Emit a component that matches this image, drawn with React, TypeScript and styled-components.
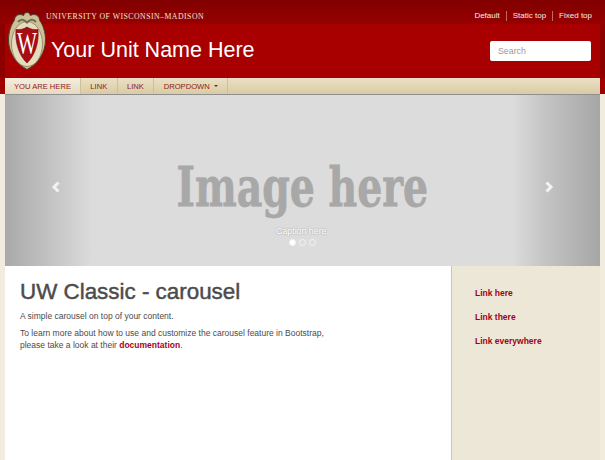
import React from "react";
import styled, { createGlobalStyle } from "styled-components";

const Global = createGlobalStyle`
  html, body { margin: 0; padding: 0; height: 100%; overflow: hidden; }
  body { background: #ede7d7; font-family: "Liberation Sans", Arial, sans-serif; color: #4f4f4f; }
`;

const Page = styled.div`
  width: 605px;
  height: 460px;
  overflow: hidden;
  position: relative;
  background: linear-gradient(#a00000 0, #a00000 94px, #f2ecdf 94px);
`;

const TopStrip = styled.div`
  height: 24px;
  box-sizing: border-box;
  display: flex;
  align-items: center;
  justify-content: space-between;
  padding: 8px 13px 0 46px;
  background: linear-gradient(#820000, #960000);
`;

const Wordmark = styled.div`
  font-family: "Liberation Serif", serif;
  font-size: 7.8px;
  letter-spacing: 0.46px;
  color: #f0e2d6;
  white-space: nowrap;
`;

const Utility = styled.nav`
  display: flex;
  align-items: center;
  font-size: 8px;
  color: #f6ece2;
`;

const UtilityLink = styled.a<{ $divided?: boolean }>`
  padding-left: ${(p) => (p.$divided ? "6px" : "0")};
  margin-left: ${(p) => (p.$divided ? "6px" : "0")};
  border-left: ${(p) => (p.$divided ? "1px solid #c26a5e" : "none")};
  line-height: 10px;
`;

const Masthead = styled.header`
  height: 54px;
  margin: 0 5px;
  box-sizing: border-box;
  display: flex;
  align-items: center;
  justify-content: space-between;
  padding: 0 9px 1px 46px;
  background: #a80000;
`;

const Sides = styled.div`
  background: linear-gradient(90deg, #8c0000 5px, transparent 5px, transparent 600px, #8c0000 600px);
`;

const UnitName = styled.h1`
  margin: 0 0 1px;
  font-size: 21.5px;
  line-height: 30px;
  font-weight: 400;
  color: #fff;
  white-space: nowrap;
`;

const Search = styled.input`
  width: 101px;
  height: 20px;
  box-sizing: border-box;
  border: none;
  border-radius: 2px;
  padding: 0 8px;
  background: #fff;
  font: 8.8px "Liberation Sans", Arial, sans-serif;
  &::placeholder { color: #9a9a9a; opacity: 1; }
`;

const Crest = styled.svg`
  position: absolute;
  left: 8px;
  top: 12px;
`;

const NavBar = styled.nav`
  height: 16px;
  margin: 0 5px;
  display: flex;
  background: linear-gradient(#ebe0c6, #d9cba4);
`;

const NavItem = styled.a<{ $active?: boolean }>`
  display: flex;
  align-items: center;
  gap: 4px;
  padding: 0 ${(p) => (p.$active ? "9px" : "9.4px")};
  font-size: 7.6px;
  color: #8e1a14;
  white-space: nowrap;
  border-right: 1px solid #cfc09b;
  background: ${(p) => (p.$active ? "linear-gradient(#f5eee0, #e6dabd)" : "transparent")};
`;

const Caret = styled.span`
  width: 0;
  height: 0;
  border-left: 2px solid transparent;
  border-right: 2px solid transparent;
  border-top: 2px solid #8e1a14;
`;

const Carousel = styled.section`
  height: 172px;
  margin: 0 5px;
  position: relative;
  display: flex;
  flex-direction: column;
  align-items: center;
  border-top: 1px solid #8f8f8f;
  box-sizing: border-box;
  background: linear-gradient(90deg, #a9a9a9 0, #c0c0c0 40px, #dcdcdc 88px, #dcdcdc 507px, #c4c4c4 540px, #a6a6a6 595px);
`;

const Placeholder = styled.div`
  margin-top: 56px;
  font-family: "DejaVu Serif", serif;
  font-weight: 700;
  font-size: 54px;
  line-height: 72px;
  color: #a8a8a8;
  white-space: nowrap;
  transform: scaleX(0.73);
  -webkit-text-stroke: 0.8px #a8a8a8;
`;

const Caption = styled.div`
  margin-top: 3px;
  font-size: 8.8px;
  line-height: 10px;
  color: #fff;
  text-shadow: 0 0 2px rgba(0, 0, 0, 0.35);
`;

const Dots = styled.div`
  margin-top: 3px;
  display: flex;
  gap: 3px;
`;

const Dot = styled.span<{ $on?: boolean }>`
  width: 7px;
  height: 7px;
  box-sizing: border-box;
  border-radius: 50%;
  border: 1px solid #f4f4f4;
  background: ${(p) => (p.$on ? "#fff" : "transparent")};
`;

const Arrow = styled.svg<{ $side: "left" | "right" }>`
  position: absolute;
  top: 86px;
  ${(p) => (p.$side === "left" ? "left: 46px;" : "right: 46px;")}
`;

const Body = styled.div`
  margin: 0 5px;
  height: 194px;
  display: flex;
`;

const Main = styled.main`
  flex: 1;
  background: #fff;
  padding: 13px 16px 0 15px;
`;

const Title = styled.h2`
  margin: 0 0 5px;
  font-size: 22.4px;
  line-height: 26px;
  font-weight: 400;
  color: #4c4c4c;
  white-space: nowrap;
  -webkit-text-stroke: 0.45px #4c4c4c;
`;

const Para = styled.p`
  margin: 0 0 5px;
  font-size: 8.5px;
  line-height: 12px;
  color: #4a4a4a;
  width: 330px;
`;

const DocLink = styled.a`
  font-weight: 700;
  color: #a8001c;
`;

const Aside = styled.aside`
  width: 149px;
  box-sizing: border-box;
  background: #ede7d7;
  border-left: 1px solid #cfc8a8;
  padding: 22px 0 0 23px;
  display: flex;
  flex-direction: column;
  gap: 14px;
`;

const SideLink = styled.a`
  font-size: 8.5px;
  line-height: 10px;
  font-weight: 700;
  color: #a30016;
`;

const Chevron = ({ side }: { side: "left" | "right" }) => (
  <Arrow $side={side} width="10" height="12" viewBox="0 0 10 12">
    <path
      d={side === "left" ? "M7.5 1.5 3 6l4.5 4.5" : "M2.5 1.5 7 6l-4.5 4.500"}
      fill="none"
      stroke="#f2f2f2"
      strokeWidth="3"
    />
  </Arrow>
);

export default function App() {
  return (
    <Page>
      <Global />
      <TopStrip>
        <Wordmark>UNIVERSITY OF WISCONSIN–MADISON</Wordmark>
        <Utility>
          <UtilityLink>Default</UtilityLink>
          <UtilityLink $divided>Static top</UtilityLink>
          <UtilityLink $divided>Fixed top</UtilityLink>
        </Utility>
      </TopStrip>
      <Sides>
        <Masthead>
          <UnitName>Your Unit Name Here</UnitName>
          <Search placeholder="Search" />
        </Masthead>
      </Sides>
      <NavBar>
        <NavItem $active>YOU ARE HERE</NavItem>
        <NavItem>LINK</NavItem>
        <NavItem>LINK</NavItem>
        <NavItem>
          DROPDOWN <Caret />
        </NavItem>
      </NavBar>
      <Carousel>
        <Placeholder>Image here</Placeholder>
        <Caption>Caption here.</Caption>
        <Dots>
          <Dot $on />
          <Dot />
          <Dot />
        </Dots>
        <Chevron side="left" />
        <Chevron side="right" />
      </Carousel>
      <Body>
        <Main>
          <Title>UW Classic - carousel</Title>
          <Para>A simple carousel on top of your content.</Para>
          <Para>
            To learn more about how to use and customize the carousel feature in Bootstrap,
            please take a look at their <DocLink>documentation</DocLink>.
          </Para>
        </Main>
        <Aside>
          <SideLink>Link here</SideLink>
          <SideLink>Link there</SideLink>
          <SideLink>Link everywhere</SideLink>
        </Aside>
      </Body>
      <Crest width="38" height="58" viewBox="0 0 38 58">
        <path d="M19 .5c1.800 0 3 1.300 3.300 3 2.500-1.500 6-1.300 7.700.7 1.500 1.600 1.300 3.300 1.700 4.300C35 13 37.500 20 37.500 28c0 13-8 24-18.500 29.500C8.500 52 .5 41 .5 28c0-8 2.500-15 5.800-19.500.4-1 .2-2.700 1.700-4.300 1.700-2 5.200-2.200 7.700-.7.300-1.700 1.500-3 3.300-3z" fill="#cdbf97" stroke="#4a4030" strokeWidth="1" />
        <ellipse cx="19" cy="32" rx="15.500" ry="22.500" fill="#e6dcbd" stroke="#8d7f5d" strokeWidth=".8" />
        <path d="M8 17.500c4 .6 8-.5 11-2.500 3 2 7 3.100 11 2.500 1.200 13-3 26-11 33.500C11 43.500 6.800 30.500 8 17.500z" fill="#a80c14" stroke="#5e1010" strokeWidth=".6" />
        <text x="19" y="42" textAnchor="middle" fontFamily="Liberation Serif, serif" fontSize="32" textLength="20" lengthAdjust="spacingAndGlyphs" fill="#fff">W</text>
        <path d="M10 10c3-3.500 6-2.500 9 .5 3-3 6-4 9-.5" fill="none" stroke="#6d7058" strokeWidth="2" />
      </Crest>
    </Page>
  );
}
